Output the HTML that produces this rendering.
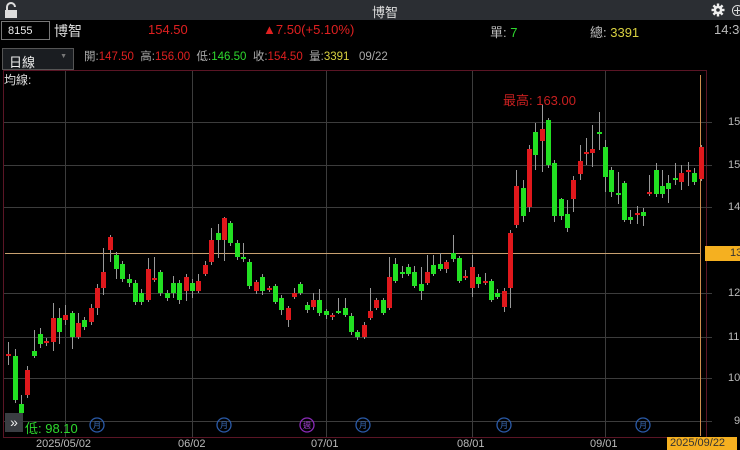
<!DOCTYPE html><html><head><meta charset="utf-8"><style>
*{margin:0;padding:0;box-sizing:border-box}
body{width:740px;height:449px;background:#000;overflow:hidden;font-family:"Liberation Sans","Noto Sans CJK TC",sans-serif;position:relative;color:#ccc}
.a{position:absolute;white-space:nowrap}
.r{color:#e02020}.g{color:#2ed82e}.y{color:#d8d040}
</style></head><body>
<div class="a" style="left:0;top:0;width:740px;height:20px;background:#2b2e33"></div>
<svg class="a" style="left:4px;top:2px" width="14" height="16" viewBox="0 0 14 16"><path d="M3 8V5a4 4 0 0 1 8 0" fill="none" stroke="#ddd" stroke-width="2"/><rect x="1" y="8" width="12" height="8" fill="#ddd"/></svg>
<div class="a" style="left:372px;top:2px;font-size:13px;color:#ddd">博智</div>
<svg class="a" style="left:711px;top:3px" width="14" height="14" viewBox="0 0 14 14"><g stroke="#eee" stroke-width="2.4"><line x1="7" y1="0.5" x2="7" y2="13.5"/><line x1="0.5" y1="7" x2="13.5" y2="7"/><line x1="2.4" y1="2.4" x2="11.6" y2="11.6"/><line x1="11.6" y1="2.4" x2="2.4" y2="11.6"/></g><circle cx="7" cy="7" r="4.3" fill="#eee"/><circle cx="7" cy="7" r="1.8" fill="#2b2e33"/></svg>
<div class="a" style="left:730px;top:0px;font-size:15px;color:#ddd">⊕</div>
<div class="a" style="left:1px;top:21px;width:49px;height:19px;border:1px solid #777;font-size:11px;color:#eee;padding:3px 0 0 6px">8155</div>
<div class="a" style="left:54px;top:21px;font-size:14px;color:#ddd">博智</div>
<div class="a r" style="left:148px;top:22px;font-size:13px">154.50</div>
<div class="a r" style="left:263px;top:22px;font-size:13px">▲7.50(+5.10%)</div>
<div class="a" style="left:490px;top:22px;font-size:13px;color:#bbb">單: <span class="g">7</span></div>
<div class="a" style="left:590px;top:22px;font-size:13px;color:#bbb">總: <span class="y">3391</span></div>
<div class="a" style="left:714px;top:22px;font-size:13px;color:#bbb">14:30</div>
<div class="a" style="left:2px;top:48px;width:72px;height:22px;border:1px solid #555;background:#1a1d21;font-size:13px;color:#eee;padding:3px 0 0 6px">日線<span style="position:absolute;right:6px;top:4px;font-size:7px;color:#777">▼</span></div>
<div class="a" style="left:84px;top:48px;font-size:11.5px;color:#aaa">開:<span class="r">147.50</span>&nbsp; 高:<span class="r">156.00</span>&nbsp; 低:<span class="g">146.50</span>&nbsp; 收:<span class="r">154.50</span>&nbsp; 量:<span class="y">3391</span>&nbsp;&nbsp; 09/22</div>
<svg class="a" style="left:0;top:0" width="740" height="449">
<rect x="3.5" y="70.5" width="703" height="367" fill="none" stroke="#5a1525"/>
<g stroke="#3c3c3c" stroke-width="1">
<line x1="4" y1="122.5" x2="712" y2="122.5"/><line x1="4" y1="165.5" x2="712" y2="165.5"/><line x1="4" y1="207.5" x2="712" y2="207.5"/><line x1="4" y1="293.5" x2="712" y2="293.5"/><line x1="4" y1="337.5" x2="712" y2="337.5"/><line x1="4" y1="378.5" x2="712" y2="378.5"/><line x1="4" y1="421.5" x2="712" y2="421.5"/>
<line x1="65.5" y1="71" x2="65.5" y2="437"/><line x1="192.5" y1="71" x2="192.5" y2="437"/><line x1="326.5" y1="71" x2="326.5" y2="437"/><line x1="472.5" y1="71" x2="472.5" y2="437"/><line x1="605.5" y1="71" x2="605.5" y2="437"/>
</g>
<line x1="5" y1="253.5" x2="700" y2="253.5" stroke="#c8a070"/>
<line x1="700.5" y1="75" x2="700.5" y2="436" stroke="#d09050"/>
<g stroke="#999" stroke-width="1">
<path d="M8.5 342V365M15.5 349V403M21.5 395V418M27.5 366V398M34.5 330V358M40.5 328V348M46.5 338V346M53.5 303V351M59.5 308V344M65.5 305V325M72.5 311V349M78.5 313V339M84.5 317V330M91.5 304V325M97.5 284V315M103.5 248V295M110.5 235V262M116.5 252V279M122.5 261V282M129.5 274V287M135.5 280V305M141.5 289V305M148.5 258V302M154.5 257V282M160.5 270V296M167.5 290V301M173.5 276V298M179.5 280V304M186.5 274V301M192.5 279V298M198.5 274V293M205.5 261V276M211.5 228V265M218.5 224V258M224.5 217V261M230.5 221V246M237.5 240V260M243.5 243V262M249.5 259V289M256.5 280V294M262.5 274V295M269.5 286V292M275.5 284V304M281.5 295V315M288.5 306V327M294.5 288V299M300.5 282V295M307.5 302V313M313.5 293V310M319.5 289V316M326.5 309V319M332.5 313V320M338.5 298V314M345.5 298V317M351.5 313V335M357.5 330V340M364.5 322V339M370.5 288V320M376.5 298V310M383.5 298V315M389.5 257V310M395.5 258V283M402.5 266V278M408.5 264V276M414.5 266V288M421.5 267V300M427.5 255V285M433.5 255V276M440.5 253V271M446.5 260V273M453.5 235V262M459.5 256V283M465.5 270V280M472.5 255V297M478.5 274V288M485.5 273V285M491.5 279V302M497.5 289V299M504.5 288V312M510.5 230V308M516.5 170V228M523.5 180V222M529.5 145V212M535.5 123V170M542.5 105V172M548.5 118V168M554.5 160V222M561.5 198V220M567.5 200V232M573.5 176V212M580.5 145V180M586.5 138V165M592.5 125V167M599.5 112V150M605.5 140V192M611.5 167V197M618.5 172V204M624.5 181V222M630.5 210V224M637.5 206V224M643.5 208V226M649.5 175V196M656.5 163V197M662.5 170V198M668.5 175V203M675.5 163V185M681.5 165V190M688.5 162V186M694.5 168V185M701.5 145V181"/>
</g>
<g fill="#e0181c">
<rect x="6" y="354" width="5" height="2"/><rect x="25" y="370" width="5" height="25"/><rect x="44" y="341" width="5" height="2"/><rect x="51" y="318" width="5" height="24"/><rect x="63" y="315" width="5" height="5"/><rect x="76" y="323" width="5" height="14"/><rect x="89" y="308" width="5" height="14"/><rect x="95" y="288" width="5" height="20"/><rect x="101" y="272" width="5" height="16"/><rect x="108" y="237" width="5" height="13"/><rect x="146" y="269" width="5" height="31"/><rect x="152" y="278" width="5" height="2"/><rect x="184" y="277" width="5" height="14"/><rect x="196" y="281" width="5" height="10"/><rect x="203" y="265" width="5" height="9"/><rect x="209" y="240" width="5" height="22"/><rect x="222" y="218" width="5" height="22"/><rect x="254" y="282" width="5" height="9"/><rect x="267" y="288" width="5" height="2"/><rect x="286" y="308" width="5" height="12"/><rect x="292" y="293" width="5" height="4"/><rect x="311" y="300" width="5" height="7"/><rect x="330" y="315" width="5" height="2"/><rect x="362" y="325" width="5" height="12"/><rect x="368" y="311" width="5" height="7"/><rect x="374" y="300" width="5" height="8"/><rect x="387" y="277" width="5" height="31"/><rect x="425" y="272" width="5" height="11"/><rect x="444" y="262" width="5" height="7"/><rect x="463" y="276" width="5" height="2"/><rect x="470" y="267" width="5" height="21"/><rect x="483" y="281" width="5" height="2"/><rect x="502" y="291" width="5" height="16"/><rect x="508" y="233" width="5" height="55"/><rect x="514" y="186" width="5" height="39"/><rect x="527" y="149" width="5" height="58"/><rect x="540" y="129" width="5" height="12"/><rect x="571" y="180" width="5" height="19"/><rect x="578" y="161" width="5" height="13"/><rect x="584" y="152" width="5" height="2"/><rect x="590" y="149" width="5" height="4"/><rect x="635" y="213" width="5" height="2"/><rect x="647" y="192" width="5" height="2"/><rect x="679" y="173" width="5" height="9"/><rect x="686" y="170" width="5" height="2"/><rect x="699" y="147" width="5" height="32"/>
</g>
<g fill="#22e022">
<rect x="13" y="356" width="5" height="44"/><rect x="19" y="404" width="5" height="9"/><rect x="32" y="351" width="5" height="5"/><rect x="38" y="334" width="5" height="10"/><rect x="57" y="318" width="5" height="14"/><rect x="70" y="313" width="5" height="24"/><rect x="82" y="320" width="5" height="7"/><rect x="114" y="255" width="5" height="14"/><rect x="120" y="264" width="5" height="15"/><rect x="127" y="279" width="5" height="4"/><rect x="133" y="283" width="5" height="19"/><rect x="139" y="293" width="5" height="9"/><rect x="158" y="272" width="5" height="21"/><rect x="165" y="293" width="5" height="5"/><rect x="171" y="283" width="5" height="10"/><rect x="177" y="283" width="5" height="17"/><rect x="190" y="283" width="5" height="8"/><rect x="216" y="233" width="5" height="7"/><rect x="228" y="223" width="5" height="20"/><rect x="235" y="243" width="5" height="14"/><rect x="241" y="257" width="5" height="2"/><rect x="247" y="262" width="5" height="24"/><rect x="260" y="277" width="5" height="14"/><rect x="273" y="286" width="5" height="16"/><rect x="279" y="298" width="5" height="12"/><rect x="298" y="284" width="5" height="9"/><rect x="305" y="305" width="5" height="5"/><rect x="317" y="300" width="5" height="13"/><rect x="324" y="311" width="5" height="4"/><rect x="336" y="311" width="5" height="2"/><rect x="343" y="308" width="5" height="7"/><rect x="349" y="316" width="5" height="16"/><rect x="355" y="332" width="5" height="5"/><rect x="381" y="300" width="5" height="13"/><rect x="393" y="264" width="5" height="17"/><rect x="400" y="272" width="5" height="2"/><rect x="406" y="267" width="5" height="7"/><rect x="412" y="272" width="5" height="14"/><rect x="419" y="284" width="5" height="7"/><rect x="431" y="265" width="5" height="9"/><rect x="438" y="264" width="5" height="5"/><rect x="451" y="253" width="5" height="6"/><rect x="457" y="258" width="5" height="23"/><rect x="476" y="277" width="5" height="7"/><rect x="489" y="281" width="5" height="19"/><rect x="495" y="293" width="5" height="4"/><rect x="521" y="188" width="5" height="28"/><rect x="533" y="132" width="5" height="23"/><rect x="546" y="120" width="5" height="45"/><rect x="552" y="163" width="5" height="53"/><rect x="559" y="199" width="5" height="17"/><rect x="565" y="214" width="5" height="14"/><rect x="597" y="132" width="5" height="2"/><rect x="603" y="147" width="5" height="30"/><rect x="609" y="170" width="5" height="22"/><rect x="616" y="193" width="5" height="2"/><rect x="622" y="183" width="5" height="37"/><rect x="628" y="217" width="5" height="3"/><rect x="641" y="212" width="5" height="4"/><rect x="654" y="170" width="5" height="24"/><rect x="660" y="186" width="5" height="8"/><rect x="666" y="183" width="5" height="6"/><rect x="673" y="178" width="5" height="2"/><rect x="692" y="173" width="5" height="9"/>
</g>
<g fill="none" stroke="#2a5aa8" stroke-width="1.3">
<circle cx="97" cy="425" r="7"/><circle cx="224" cy="425" r="7"/><circle cx="363" cy="425" r="7"/><circle cx="504" cy="425" r="7"/><circle cx="643" cy="425" r="7"/></g>
<circle cx="307" cy="425" r="7" fill="none" stroke="#8a2ab8" stroke-width="1.3"/>
<g font-size="8" fill="#3a70c0" text-anchor="middle" font-family="Noto Sans CJK TC"><text x="97" y="428">月</text><text x="224" y="428">月</text><text x="363" y="428">月</text><text x="504" y="428">月</text><text x="643" y="428">月</text><text x="307" y="428" fill="#a040d0">週</text></g>
<rect x="705" y="246" width="35" height="15" fill="#f5b020"/>
</svg>
<div class="a" style="left:4px;top:71px;font-size:12px;color:#ddd">均線:</div>
<div class="a r" style="left:503px;top:90px;font-size:13px;color:#c82020">最高: 163.00</div>
<div class="a" style="left:5px;top:413px;width:18px;height:19px;background:#3a3d42;color:#eee;font-size:14px;text-align:center;line-height:18px">»</div>
<div class="a g" style="left:25px;top:418px;font-size:13px">低: 98.10</div>
<div style="font-size:11px;color:#bbb">
<div class="a" style="left:728px;top:116px">15</div><div class="a" style="left:728px;top:159px">15</div><div class="a" style="left:728px;top:201px">14</div><div class="a" style="left:730px;top:247px;color:#333">13</div><div class="a" style="left:728px;top:287px">12</div><div class="a" style="left:728px;top:331px">11</div><div class="a" style="left:728px;top:372px">10</div><div class="a" style="left:734px;top:415px">9</div>
</div>
<div class="a" style="left:36px;top:438px;font-size:11px;color:#bbb">2025/05/02</div>
<div class="a" style="left:178px;top:438px;font-size:11px;color:#bbb">06/02</div>
<div class="a" style="left:311px;top:438px;font-size:11px;color:#bbb">07/01</div>
<div class="a" style="left:457px;top:438px;font-size:11px;color:#bbb">08/01</div>
<div class="a" style="left:590px;top:438px;font-size:11px;color:#bbb">09/01</div>
<div class="a" style="left:667px;top:437px;width:70px;height:13px;background:#f5b020;font-size:11px;color:#333;padding-left:3px">2025/09/22</div>
</body></html>
